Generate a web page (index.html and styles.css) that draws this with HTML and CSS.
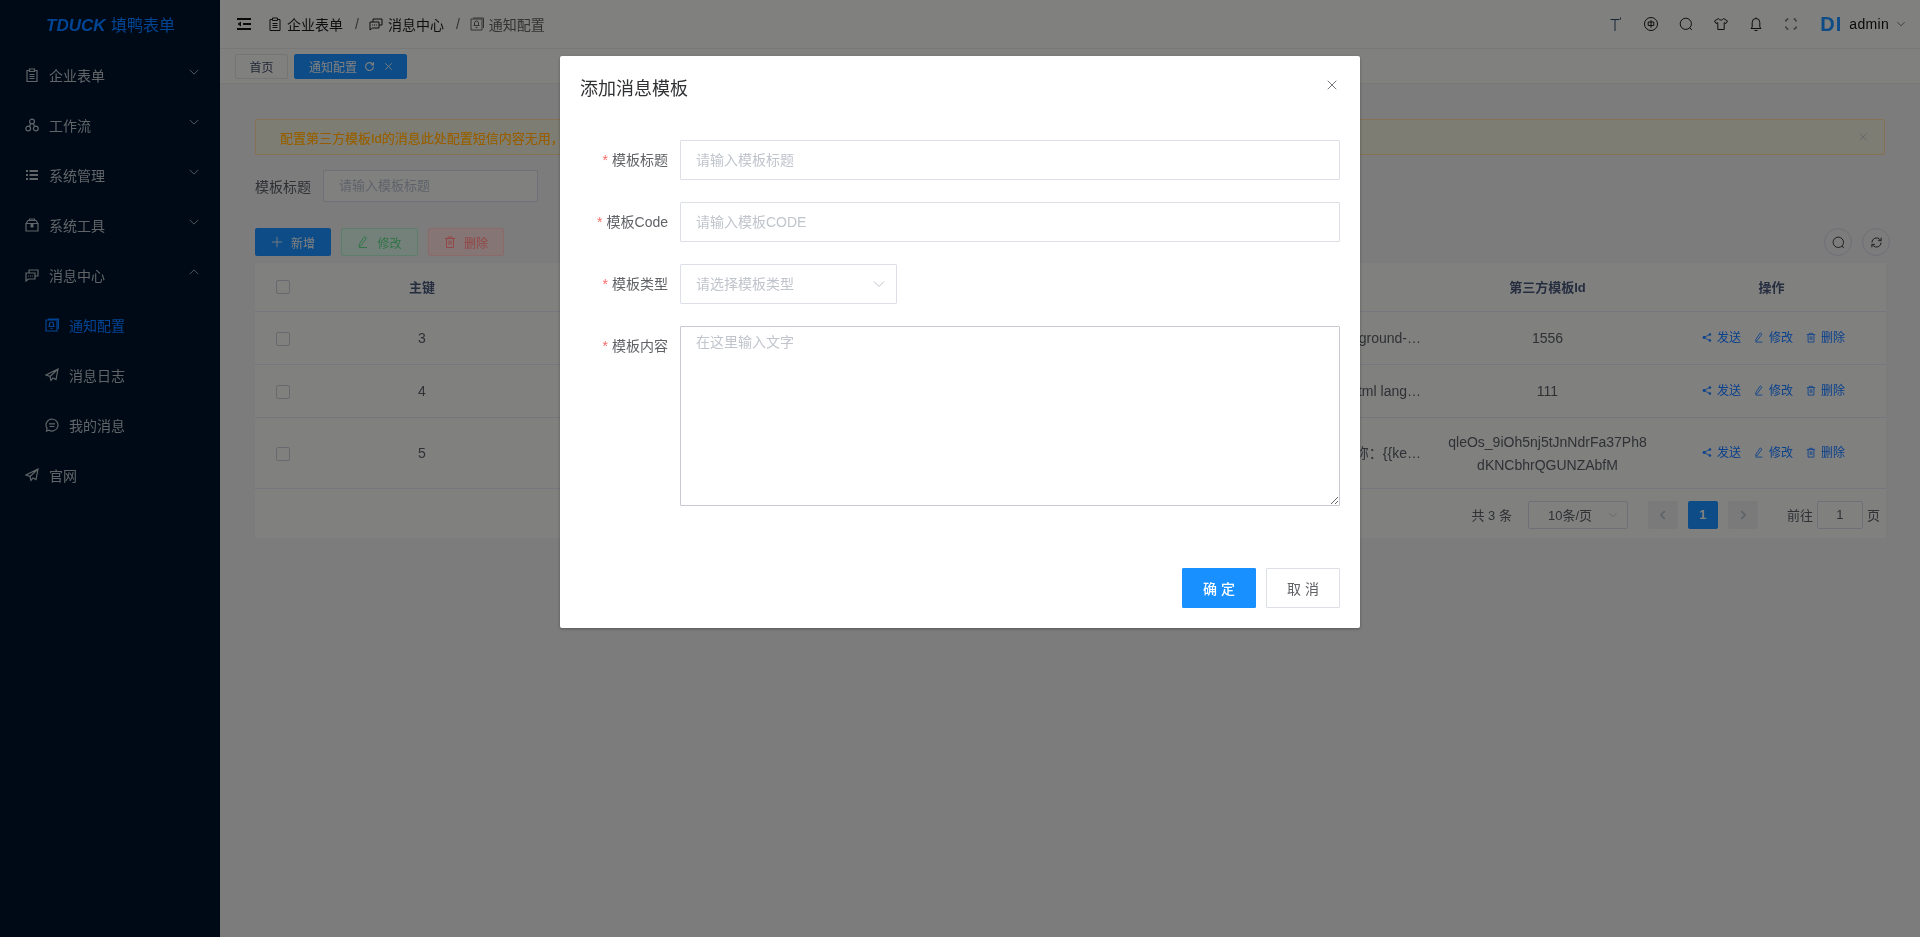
FILE: index.html
```html
<!DOCTYPE html>
<html lang="zh">

<head>
    <meta charset="UTF-8">
    <meta name="viewport" content="width=device-width, initial-scale=1.0">
    <title>通知配置 - TDUCK 填鸭表单</title>
    <link rel="stylesheet" href="styles.css">
</head>

<body>
    <svg class="icon-defs" aria-hidden="true">
        <symbol id="i-form" viewBox="0 0 14 14"><path d="M4 2.500H2v11h10v-11h-2M4.500 1h5v2.500h-5zM4.500 6.500h5M4.500 8.500h5M4.500 10.500h5"/></symbol>
        <symbol id="i-flow" viewBox="0 0 14 14"><circle cx="7" cy="3.500" r="2.400"/><circle cx="3.200" cy="10.500" r="2.400"/><circle cx="10.800" cy="10.500" r="2.400"/><path d="M5.800 5.500 4.500 8.300M8.200 5.500l1.300 2.800"/></symbol>
        <symbol id="i-list" viewBox="0 0 14 14"><path d="M1 3h2M1 7h2M1 11h2M4.500 3H13M4.500 7H13M4.500 11H13" stroke-width="2"/></symbol>
        <symbol id="i-tool" viewBox="0 0 14 14"><path d="M1 5.500h12V13H1zM1 5.500 3 2.500h8l2 3M4.500 2.500V1h5v1.500"/><path d="M5.500 6h3v3.500h-3z" class="solid"/></symbol>
        <symbol id="i-chat" viewBox="0 0 14 14"><path d="M1 5h9v6H3.500L1 13zM4 5V2h9v6h-3M3.200 8h1M5 8h1M6.800 8h1"/></symbol>
        <symbol id="i-bell" viewBox="0 0 14 14"><path d="M1 2h11v11H1zM3 1h10.500v10M6.500 4a2 2 0 0 1 2 2v2.500H4.500V6a2 2 0 0 1 2-2zM3.500 8.500h6M5.500 10.500h2"/></symbol>
        <symbol id="i-send" viewBox="0 0 14 14"><path d="M13 1 1 7l4 1.500 1 4 2-2.500 3 1.500zM13 1 5 8.500"/></symbol>
        <symbol id="i-msg" viewBox="0 0 14 14"><path d="M7 1a6 6 0 1 1-3 11.200L1.500 13l.6-2.600A6 6 0 0 1 7 1zM4 5.800h6M4.500 8.500h5"/></symbol>
        <symbol id="i-down" viewBox="0 0 14 14"><path d="M2 4.500 7 9.500l5-5"/></symbol>
        <symbol id="i-up" viewBox="0 0 14 14"><path d="M2 9.500 7 4.500l5 5"/></symbol>
        <symbol id="i-x" viewBox="0 0 14 14"><path d="M2 2l10 10M12 2 2 12"/></symbol>
        <symbol id="i-search" viewBox="0 0 14 14"><circle cx="6.800" cy="6.800" r="5.600"/><path d="M10.800 10.800 12.800 13"/></symbol>
        <symbol id="i-share" viewBox="0 0 12 12"><circle cx="2.500" cy="6" r="1.700" class="solid"/><circle cx="9.500" cy="2.300" r="1.500" class="solid"/><circle cx="9.500" cy="9.700" r="1.500" class="solid"/><path d="M2.500 6l7-3.700M2.500 6l7 3.700"/></symbol>
        <symbol id="i-edit" viewBox="0 0 12 12"><path d="M7.500 .5 9.500 2 4 9.500 2 10.500l.3-2.300zM2 11.500h8"/></symbol>
        <symbol id="i-trash" viewBox="0 0 12 12"><path d="M1 2.500h10M4 2.500V1h4v1.500M2.500 2.500V11.500h7V2.500M5 4.500v4.500M7 4.500v4.500"/></symbol>
        <symbol id="i-reload" viewBox="0 0 14 14"><path d="M12 7a5 5 0 1 1-1.500-3.500L12 5M12 1.500V5H8.500"/></symbol>
        <symbol id="i-refresh" viewBox="0 0 14 14"><path d="M2 7a5 5 0 0 1 8.500-3.500L12 5M12 7a5 5 0 0 1-8.500 3.500L2 9M12 1.800V5H8.800M2 12.200V9h3.200"/></symbol>
    </svg>

    <div class="app">
        <aside class="sidebar">
            <div class="logo"><i>TDUCK</i> 填鸭表单</div>
            <nav class="menu">
                <a class="menu-item"><svg class="icon"><use href="#i-form"/></svg>企业表单<svg class="arrow"><use href="#i-down"/></svg></a>
                <a class="menu-item"><svg class="icon"><use href="#i-flow"/></svg>工作流<svg class="arrow"><use href="#i-down"/></svg></a>
                <a class="menu-item"><svg class="icon"><use href="#i-list"/></svg>系统管理<svg class="arrow"><use href="#i-down"/></svg></a>
                <a class="menu-item"><svg class="icon"><use href="#i-tool"/></svg>系统工具<svg class="arrow"><use href="#i-down"/></svg></a>
                <a class="menu-item"><svg class="icon"><use href="#i-chat"/></svg>消息中心<svg class="arrow"><use href="#i-up"/></svg></a>
                <a class="menu-item sub active"><svg class="icon"><use href="#i-bell"/></svg>通知配置</a>
                <a class="menu-item sub"><svg class="icon"><use href="#i-send"/></svg>消息日志</a>
                <a class="menu-item sub"><svg class="icon"><use href="#i-msg"/></svg>我的消息</a>
                <a class="menu-item"><svg class="icon"><use href="#i-send"/></svg>官网</a>
            </nav>
        </aside>

        <main class="main">
            <header class="navbar">
                <svg class="fold" viewBox="0 0 14 12"><path d="M0 1h14M6 6h8M0 11h14" stroke-width="2"/><path d="M4 3.500 .5 6 4 8.500z" class="solid"/></svg>
                <div class="crumbs">
                    <svg class="crumb-icon narrow"><use href="#i-form"/></svg><span>企业表单</span><em>/</em>
                    <svg class="crumb-icon"><use href="#i-chat"/></svg><span>消息中心</span><em>/</em>
                    <svg class="crumb-icon dim"><use href="#i-bell"/></svg><span class="last">通知配置</span>
                </div>
                <div class="tools">
                    <svg class="tool tint" viewBox="0 0 14 14"><path d="M1.500 2.500h9M6 2.500V14M11.500 .5v2"/></svg>
                    <svg class="tool" viewBox="0 0 14 14"><circle cx="7" cy="7" r="6.500"/><path d="M4.200 5h5.600v3.500H4.200zM7 3.200v7.600"/></svg>
                    <svg class="tool"><use href="#i-search"/></svg>
                    <svg class="tool" viewBox="0 0 14 14"><path d="M4.500 1.500 .5 4l1.500 2.500 1.800-.8V12.500h6.400V5.700l1.800.8L13.500 4l-4-2.500C9 3.500 5 3.500 4.500 1.500z"/></svg>
                    <svg class="tool" viewBox="0 0 14 14"><path d="M7 1.500a3.800 3.800 0 0 1 3.800 3.800V10l1.200 1.500H2L3.200 10V5.300A3.800 3.800 0 0 1 7 1.500zM7 .5v1M5.500 13.500h3"/></svg>
                    <svg class="tool soft" viewBox="0 0 14 14"><path d="M2 4.500V2.200h2.300M9.700 2.200H12v2.300M12 9.500v2.300H9.700M4.300 11.800H2V9.500" stroke-width="1.300" stroke-dasharray="2 1"/></svg>
                    <div class="avatar">DI</div>
                    <span class="user">admin</span>
                    <svg class="user-arrow"><use href="#i-down"/></svg>
                </div>
            </header>

            <div class="tags">
                <span class="tag">首页</span>
                <span class="tag on">通知配置<svg class="tag-icon"><use href="#i-reload"/></svg><svg class="tag-icon close"><use href="#i-x"/></svg></span>
            </div>

            <section class="content">
                <div class="alert">
                    <span>配置第三方模板Id的消息此处配置短信内容无用，</span>
                    <svg class="alert-close"><use href="#i-x"/></svg>
                </div>

                <div class="filter">
                    <label>模板标题</label>
                    <div class="filter-input">请输入模板标题</div>
                </div>

                <div class="toolbar">
                    <button class="btn primary"><svg class="btn-icon" viewBox="0 0 14 14"><path d="M7 1v12M1 7h12"/></svg>新增</button>
                    <button class="btn green"><svg class="btn-icon"><use href="#i-edit"/></svg>修改</button>
                    <button class="btn red"><svg class="btn-icon"><use href="#i-trash"/></svg>删除</button>
                    <div class="round-group">
                        <span class="round"><svg><use href="#i-search"/></svg></span>
                        <span class="round"><svg><use href="#i-refresh"/></svg></span>
                    </div>
                </div>

                <div class="panel">
                    <table class="table">
                        <colgroup>
                            <col class="c-check"><col class="c-id"><col class="c-body"><col class="c-third"><col class="c-op">
                        </colgroup>
                        <thead>
                            <tr>
                                <th><span class="check"></span></th>
                                <th>主键</th>
                                <th></th>
                                <th>第三方模板Id</th>
                                <th>操作</th>
                            </tr>
                        </thead>
                        <tbody>
                            <tr>
                                <td><span class="check"></span></td>
                                <td>3</td>
                                <td class="clip">background-…</td>
                                <td>1556</td>
                                <td>
                                    <div class="ops">
                                        <a><svg><use href="#i-share"/></svg>发送</a>
                                        <a><svg><use href="#i-edit"/></svg>修改</a>
                                        <a><svg><use href="#i-trash"/></svg>删除</a>
                                    </div>
                                </td>
                            </tr>
                            <tr>
                                <td><span class="check"></span></td>
                                <td>4</td>
                                <td class="clip">html lang…</td>
                                <td>111</td>
                                <td>
                                    <div class="ops">
                                        <a><svg><use href="#i-share"/></svg>发送</a>
                                        <a><svg><use href="#i-edit"/></svg>修改</a>
                                        <a><svg><use href="#i-trash"/></svg>删除</a>
                                    </div>
                                </td>
                            </tr>
                            <tr class="tall">
                                <td><span class="check"></span></td>
                                <td>5</td>
                                <td class="clip">昵称：{{ke…</td>
                                <td>qleOs_9iOh5nj5tJnNdrFa37Ph8<br>dKNCbhrQGUNZAbfM</td>
                                <td>
                                    <div class="ops">
                                        <a><svg><use href="#i-share"/></svg>发送</a>
                                        <a><svg><use href="#i-edit"/></svg>修改</a>
                                        <a><svg><use href="#i-trash"/></svg>删除</a>
                                    </div>
                                </td>
                            </tr>
                        </tbody>
                    </table>

                    <div class="pager">
                        <span class="total">共 3 条</span>
                        <span class="size">10条/页<svg><use href="#i-down"/></svg></span>
                        <span class="page-btn"><svg viewBox="0 0 14 14"><path d="M9 2.500 4.500 7 9 11.500"/></svg></span>
                        <span class="page-btn on">1</span>
                        <span class="page-btn"><svg viewBox="0 0 14 14"><path d="M5 2.500 9.500 7 5 11.500"/></svg></span>
                        <span class="jump">前往</span>
                        <span class="jump-input">1</span>
                        <span class="jump-end">页</span>
                    </div>
                </div>
            </section>
        </main>
    </div>

    <div class="mask"></div>

    <div class="dialog">
        <div class="dialog-head">
            <h2>添加消息模板</h2>
            <svg class="dialog-close"><use href="#i-x"/></svg>
        </div>
        <form class="dialog-form">
            <label class="field-label"><b>*</b>模板标题</label>
            <div class="input">请输入模板标题</div>
            <label class="field-label"><b>*</b>模板Code</label>
            <div class="input">请输入模板CODE</div>
            <label class="field-label"><b>*</b>模板类型</label>
            <div class="input select">请选择模板类型<svg><use href="#i-down"/></svg></div>
            <label class="field-label"><b>*</b>模板内容</label>
            <textarea class="textarea" placeholder="在这里输入文字"></textarea>
        </form>
        <div class="dialog-foot">
            <button class="foot-btn ok">确 定</button>
            <button class="foot-btn">取 消</button>
        </div>
    </div>
</body>

</html>
```
FILE: styles.css
```css
:root {
    --primary-color: #1890ff;
    --fill-blue: #4a8fd0;
    --menu-blue: #2a7fd8;
    --link-blue: #3f7ccf;
    --sidebar-bg: #00101e;
    --text-color: #606266;
    --title-color: #303133;
    --border-color: #dcdfe6;
    --line-color: #ebeef5;
    --placeholder: #c0c4cc;
}

* {
    margin: 0;
    padding: 0;
    box-sizing: border-box;
    font-family: "Liberation Sans", "Noto Sans CJK SC", sans-serif;
}

html,
body {
    height: 100%;
    overflow: hidden;
}

svg {
    fill: none;
    stroke: currentColor;
    stroke-width: 1;
    overflow: visible;
}

.solid {
    fill: currentColor;
    stroke: none;
}

.icon-defs {
    display: none;
}

.app {
    display: flex;
    height: 100vh;
    background-color: #f7f7f7;
}

/* 侧边栏 */
.sidebar {
    width: 220px;
    flex-shrink: 0;
    background-color: var(--sidebar-bg);
    color: #c6c9cc;
}

.logo {
    height: 50px;
    padding-left: 46px;
    font-size: 16px;
    line-height: 52px;
    color: var(--menu-blue);
}

.logo i {
    font-size: 17px;
    font-weight: 700;
    margin-right: 1px;
}

.menu-item {
    display: flex;
    align-items: center;
    height: 50px;
    padding-left: 25px;
    font-size: 14px;
    position: relative;
}

.menu-item .icon {
    width: 14px;
    height: 14px;
    margin-right: 10px;
    stroke-width: 1.2;
}

.menu-item.sub {
    padding-left: 45px;
}

.menu-item.active {
    color: var(--menu-blue);
}

.arrow {
    width: 12px;
    height: 12px;
    position: absolute;
    right: 20px;
    top: 16px;
}

/* 顶栏 */
.main {
    flex: 1;
    min-width: 0;
    display: flex;
    flex-direction: column;
}

.navbar {
    height: 49px;
    flex-shrink: 0;
    display: flex;
    align-items: center;
    padding-left: 17px;
    background-color: #fff;
    border-bottom: 1px solid #f0f0f0;
    color: #111;
}

.fold {
    width: 14px;
    height: 12px;
    margin-right: 19px;
}

.crumbs {
    display: flex;
    align-items: center;
    font-size: 14px;
    color: #1c1c1c;
}

.crumb-icon {
    width: 14px;
    height: 14px;
    margin-right: 5px;
}

.crumb-icon.narrow {
    margin-left: -2px;
    margin-right: 5px;
}

.crumb-icon.dim {
    color: #666;
}

.crumbs em {
    font-style: normal;
    margin: 0 10px 0 12px;
    color: #666;
}

.crumbs .last {
    color: #666;
}

.tools {
    margin-left: auto;
    display: flex;
    align-items: center;
    padding-right: 14px;
}

.tool {
    width: 14px;
    height: 14px;
    margin-right: 21px;
    color: #1c1c1c;
}

.tool.tint {
    color: #3a4a5c;
}

.tool.soft {
    color: #444;
}

.avatar {
    width: 22px;
    height: 24px;
    margin-left: 1px;
    overflow: hidden;
    font-size: 20px;
    font-weight: 700;
    line-height: 24px;
    letter-spacing: 1px;
    color: var(--fill-blue);
}

.user {
    margin-left: 7px;
    font-size: 14px;
    letter-spacing: 0.3px;
    color: #111;
}

.user-arrow {
    width: 10px;
    height: 10px;
    margin-left: 7px;
    color: #444;
}

/* 标签栏 */
.tags {
    height: 35px;
    flex-shrink: 0;
    display: flex;
    align-items: center;
    gap: 6px;
    padding: 0 15px;
    background-color: #fff;
    border-bottom: 1px solid #eee;
}

.tag {
    display: flex;
    align-items: center;
    height: 25px;
    padding: 0 13.5px;
    font-size: 12px;
    color: #495060;
    border: 1px solid #e8eaec;
    border-radius: 2px;
    background-color: #fff;
}

.tag.on {
    padding: 0 13px 0 14px;
    color: #fff;
    background-color: var(--fill-blue);
    border-color: var(--fill-blue);
}

.tag-icon {
    width: 11px;
    height: 11px;
    margin-left: 7px;
    stroke-width: 1.4;
}

.tag-icon.close {
    width: 9px;
    height: 9px;
    margin-left: 9px;
}

/* 内容区 */
.content {
    flex: 1;
    padding: 35px 35px 0 35px;
}

.alert {
    display: flex;
    align-items: center;
    justify-content: space-between;
    height: 36px;
    padding: 0 16px 0 24px;
    font-size: 13px;
    color: #ffbb40;
    background-color: #fbf9ee;
    border: 1px solid #fbe6c4;
    border-radius: 2px;
}

.alert-close {
    width: 10px;
    height: 10px;
    color: #c0c4cc;
}

.filter {
    display: flex;
    align-items: center;
    margin-top: 15px;
    font-size: 14px;
    color: #606266;
}

.filter-input {
    width: 215px;
    height: 32px;
    margin-left: 12px;
    padding-left: 15px;
    font-size: 13px;
    line-height: 30px;
    color: var(--placeholder);
    border: 1px solid var(--border-color);
    border-radius: 2px;
    background-color: #fff;
}

.toolbar {
    display: flex;
    gap: 10px;
    margin-top: 26px;
    height: 28px;
}

.btn {
    display: inline-flex;
    align-items: center;
    justify-content: center;
    width: 76px;
    height: 28px;
    gap: 8px;
    font-size: 12px;
    border: 1px solid transparent;
    border-radius: 2px;
    background: none;
}

.btn-icon {
    width: 12px;
    height: 12px;
}

.btn.primary {
    color: #fff;
    background-color: var(--fill-blue);
}

.btn.green {
    width: 77px;
    color: #8fd8a8;
    background-color: #f0fff7;
    border-color: #d0f5e0;
}

.btn.red {
    color: #f09a9a;
    background-color: #ffeded;
    border-color: #ffdbdb;
}

.round-group {
    margin-left: auto;
    display: flex;
    gap: 10px;
    margin-right: -5px;
}

.round {
    display: flex;
    align-items: center;
    justify-content: center;
    width: 28px;
    height: 28px;
    border: 1px solid var(--border-color);
    border-radius: 50%;
    color: #333;
}

.round svg {
    width: 13px;
    height: 13px;
}

/* 表格 */
.panel {
    height: 275px;
    margin-top: 7px;
    margin-right: -1px;
    background-color: #fff;
}

.table {
    width: 100%;
    table-layout: fixed;
    border-collapse: collapse;
    font-size: 14px;
    color: var(--text-color);
    text-align: center;
}

.c-check { width: 56px; }
.c-id { width: 222px; }
.c-third { width: 219px; }
.c-op { width: 229px; }

.table th {
    height: 48px;
    font-size: 13px;
    font-weight: 700;
    color: #515a6e;
    border-bottom: 1px solid var(--line-color);
}

.table td {
    height: 53px;
    padding-top: 2px;
    border-bottom: 1px solid var(--line-color);
    line-height: 23px;
}

.table tr.tall td {
    height: 71px;
}

.table td.clip {
    text-align: right;
    padding-right: 17px;
    white-space: nowrap;
}

.check {
    display: block;
    width: 14px;
    height: 14px;
    margin: 0 auto;
    border: 1px solid #d0d2d8;
    border-radius: 2px;
}

.ops {
    display: flex;
    gap: 13px;
    padding-left: 45px;
    font-size: 12px;
    color: var(--link-blue);
    white-space: nowrap;
}

.ops svg {
    width: 10px;
    height: 11px;
    margin-right: 5px;
    vertical-align: -1px;
}

.pager {
    display: flex;
    align-items: center;
    justify-content: flex-end;
    height: 28px;
    margin-top: 12px;
    padding-right: 6px;
    font-size: 13px;
    color: var(--text-color);
}

.size {
    display: flex;
    align-items: center;
    justify-content: space-between;
    width: 100px;
    height: 28px;
    margin-left: 16px;
    padding: 0 9px 0 19px;
    border: 1px solid var(--border-color);
    border-radius: 2px;
}

.size svg {
    width: 10px;
    height: 10px;
    color: #c0c4cc;
}

.page-btn {
    display: flex;
    align-items: center;
    justify-content: center;
    width: 30px;
    height: 28px;
    margin-left: 10px;
    background-color: #f4f4f5;
    border-radius: 2px;
    color: #c0c4cc;
    font-weight: 700;
}

.size + .page-btn {
    margin-left: 20px;
}

.page-btn svg {
    width: 12px;
    height: 12px;
    stroke-width: 2;
}

.page-btn.on {
    color: #fff;
    background-color: var(--fill-blue);
}

.jump {
    margin-left: 29px;
}

.jump-input {
    width: 46px;
    height: 28px;
    margin-left: 4px;
    line-height: 26px;
    text-align: center;
    border: 1px solid var(--border-color);
    border-radius: 2px;
}

.jump-end {
    margin-left: 4px;
}

/* 遮罩和弹窗 */
.mask {
    position: fixed;
    inset: 0;
    backdrop-filter: brightness(0.5) saturate(1.8);
}

.dialog {
    position: fixed;
    top: 56px;
    left: 560px;
    width: 800px;
    height: 572px;
    background-color: #fff;
    box-shadow: 0 1px 3px rgba(0, 0, 0, 0.3);
    border-radius: 2px;
}

.dialog-head {
    display: flex;
    align-items: center;
    justify-content: space-between;
    height: 62px;
    padding: 0 22px 0 20px;
}

.dialog-head h2 {
    font-size: 18px;
    font-weight: 400;
    color: var(--title-color);
}

.dialog-close {
    width: 12px;
    height: 12px;
    margin-top: -5px;
    color: #606266;
}

.dialog-form {
    display: grid;
    grid-template-columns: 108px 660px;
    column-gap: 12px;
    row-gap: 22px;
    align-items: start;
    margin-top: 22px;
}

.field-label {
    height: 40px;
    font-size: 14px;
    line-height: 40px;
    text-align: right;
    color: var(--text-color);
}

.field-label b {
    margin-right: 4px;
    font-weight: 400;
    color: #f56c6c;
}

.input {
    height: 40px;
    padding-left: 15px;
    font-size: 14px;
    line-height: 38px;
    color: var(--placeholder);
    border: 1px solid var(--border-color);
    border-radius: 1px;
}

.input.select {
    display: flex;
    align-items: center;
    justify-content: space-between;
    width: 217px;
    padding-right: 10px;
}

.input.select svg {
    width: 14px;
    height: 14px;
}

.textarea {
    display: block;
    width: 660px;
    height: 180px;
    padding: 4px 15px;
    font-size: 14px;
    line-height: 23px;
    border: 1px solid #c8cad0;
    border-radius: 1px;
    outline: none;
}

.textarea::placeholder {
    color: var(--placeholder);
}

.dialog-foot {
    display: flex;
    justify-content: flex-end;
    gap: 10px;
    margin-top: 62px;
    padding-right: 20px;
}

.foot-btn {
    width: 74px;
    height: 40px;
    font-size: 14px;
    color: #606266;
    background-color: #fff;
    border: 1px solid var(--border-color);
    border-radius: 1px;
}

.foot-btn.ok {
    color: #fff;
    font-weight: 500;
    background-color: var(--primary-color);
    border-color: var(--primary-color);
}
```
